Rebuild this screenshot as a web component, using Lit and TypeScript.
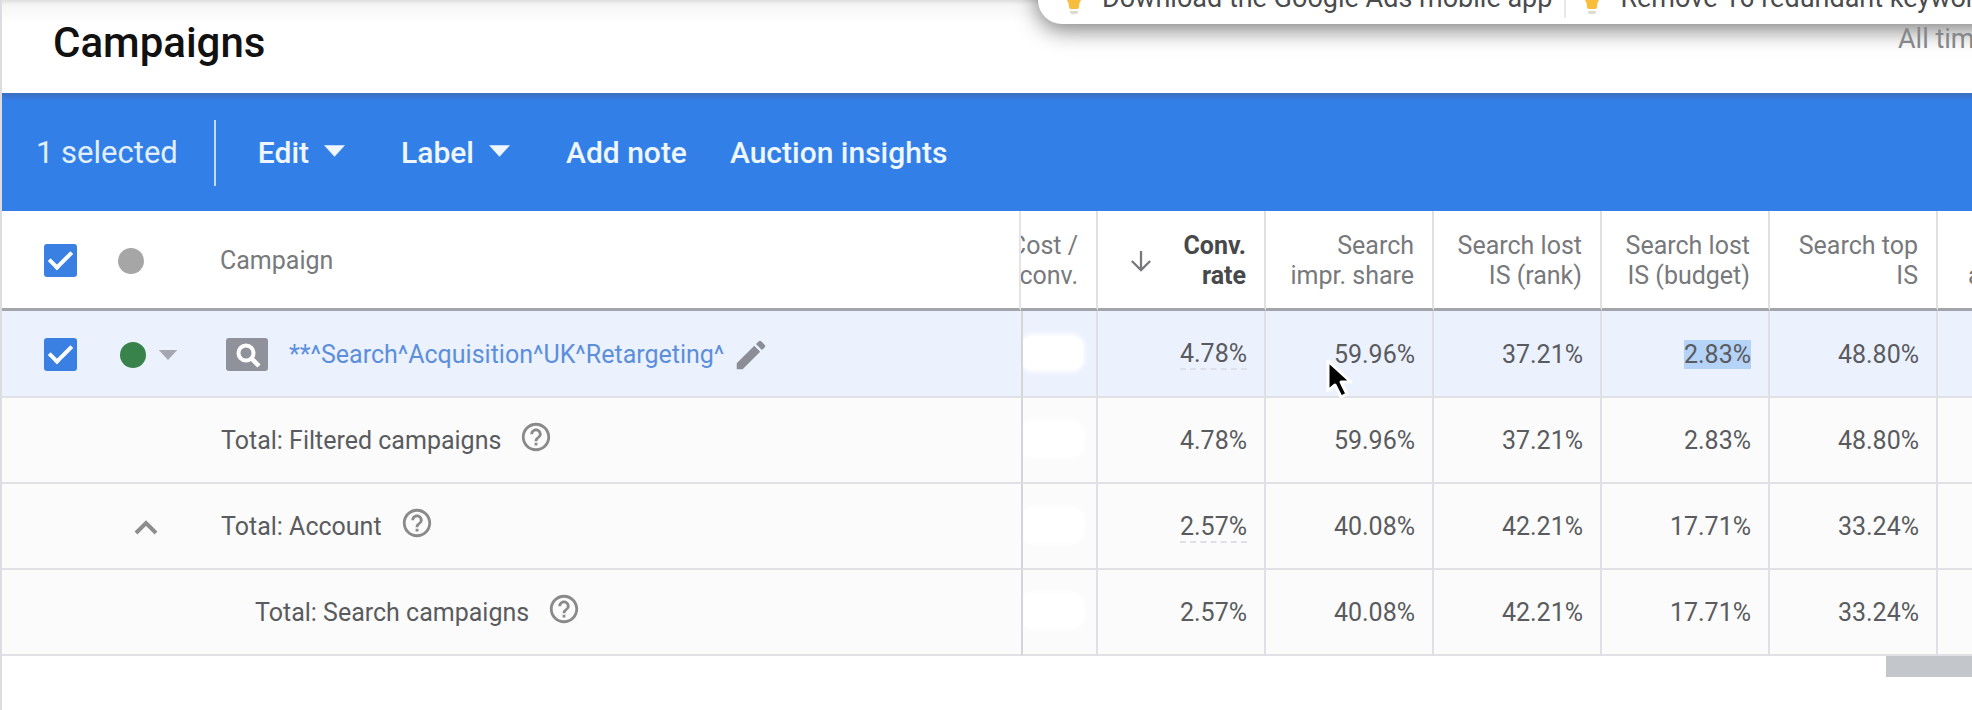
import { LitElement, html, css, svg, nothing } from "lit";
import { customElement, state } from "lit/decorators.js";
import { classMap } from "lit/directives/class-map.js";

interface Row {
  label: string;
  kind: "campaign" | "total" | "account" | "nested";
  values: string[];
  underlined: boolean;
}

const ROWS: Row[] = [
  { label: "**^Search^Acquisition^UK^Retargeting^", kind: "campaign", values: ["4.78%", "59.96%", "37.21%", "2.83%", "48.80%"], underlined: true },
  { label: "Total: Filtered campaigns", kind: "total", values: ["4.78%", "59.96%", "37.21%", "2.83%", "48.80%"], underlined: false },
  { label: "Total: Account", kind: "account", values: ["2.57%", "40.08%", "42.21%", "17.71%", "33.24%"], underlined: true },
  { label: "Total: Search campaigns", kind: "nested", values: ["2.57%", "40.08%", "42.21%", "17.71%", "33.24%"], underlined: false },
];

const COLUMNS: [string, string][] = [
  ["Search", "impr. share"],
  ["Search lost", "IS (rank)"],
  ["Search lost", "IS (budget)"],
  ["Search top", "IS"],
];

const caret = html`<svg class="caret" viewBox="0 0 22 12" aria-hidden="true">${svg`<path d="M0 0h22L11 12z" fill="currentColor"/>`}</svg>`;

const bulb = html`<svg class="bulb" viewBox="0 0 24 40" aria-hidden="true">
  <path d="M12 0a12 12 0 0 0-9 20c3 3 4 5 4 9a2 2 0 0 0 2 2h6a2 2 0 0 0 2-2c0-4 1-6 4-9A12 12 0 0 0 12 0z" fill="#f9bd3c"/>
  <path d="M8 33h8v1a2 2 0 0 1-2 2h-4a2 2 0 0 1-2-2z" fill="#dedad2"/>
</svg>`;

const help = html`<button class="icon-button help" aria-label="Help">
  <svg viewBox="0 0 24 24" width="34" height="34" aria-hidden="true">
    <path fill="currentColor" d="M11 18h2v-2h-2v2zm1-16C6.480 2 2 6.480 2 12s4.480 10 10 10 10-4.480 10-10S17.520 2 12 2zm0 18c-4.410 0-8-3.590-8-8s3.590-8 8-8 8 3.590 8 8-3.590 8-8 8zm0-14c-2.210 0-4 1.790-4 4h2c0-1.100.9-2 2-2s2 .9 2 2c0 2-3 1.750-3 5h2c0-2.250 3-2.500 3-5 0-2.210-1.790-4-4-4z"/>
  </svg>
</button>`;

@customElement("app-root")
export class AppRoot extends LitElement {
  static styles = css`
    :host {
      display: block;
      position: relative;
      min-height: 100vh;
      box-sizing: border-box;
      overflow: hidden;
      border-left: 2px solid #dcdde0;
      background: #fff;
      color: #5a5b5e;
      font: 400 25px/30px Roboto, "Open Sans", sans-serif;
    }
    button {
      border: 0;
      padding: 0;
      background: none;
      color: inherit;
      font: inherit;
      cursor: pointer;
    }
    svg { display: block; }

    .heading {
      display: flex;
      justify-content: space-between;
      height: 93px;
      box-sizing: border-box;
      padding: 18px 0 0 51px;
      background: linear-gradient(#dedede, #f6f6f6 5px, #fafafa 14px, #fff 24px);
    }
    .title {
      margin: 0;
      font-size: 42px;
      line-height: 50px;
      font-weight: 500;
      color: #111;
    }
    .range {
      width: 74px;
      padding-top: 6px;
      overflow: hidden;
      white-space: nowrap;
      font-size: 27px;
      color: #85878a;
      z-index: 2;
    }

    .tips {
      position: absolute;
      z-index: 1;
      top: -40px;
      left: 1036px;
      right: -40px;
      height: 64px;
      display: flex;
      align-items: center;
      box-sizing: border-box;
      padding: 12px 0 0 24px;
      border-radius: 24px;
      background: #fff;
      box-shadow: 0 6px 22px rgba(0, 0, 0, 0.5);
      white-space: nowrap;
      font-size: 27px;
      color: #4a4b4d;
    }
    .tip { display: flex; align-items: center; gap: 16px; }
    .tip + .tip { margin-left: 12px; padding-left: 14px; border-left: 2px solid #e8e8e8; }
    .bulb { width: 24px; height: 40px; flex: none; }

    .toolbar {
      display: flex;
      align-items: center;
      height: 118px;
      box-sizing: border-box;
      padding: 2px 34px 0;
      background: linear-gradient(#3b6fc0, #327fe8 8px);
      color: #fff;
      font-size: 30px;
      white-space: nowrap;
    }
    .selected {
      padding-right: 36px;
      font-size: 31px;
      line-height: 66px;
      border-right: 2px solid #c3dbfa;
      color: #e2efff;
    }
    .actions { display: flex; gap: 43px; margin-left: 42px; }
    .action { display: flex; align-items: center; gap: 15px; font-weight: 500; color: #eef6ff; }
    .action.menu { margin-right: 13px; }
    .caret { width: 21px; height: 12px; margin-bottom: 4px; }

    .table { width: calc(100% + 134px); table-layout: fixed; border-collapse: separate; border-spacing: 0; }
    .col-check { width: 84px; }
    .col-status { width: 134px; }
    .col-cost { width: 77px; }
    .col-metric { width: 168px; }

    th, td {
      box-sizing: border-box;
      padding: 2px 0 0;
      text-align: left;
      font-weight: 400;
      white-space: nowrap;
    }
    th { height: 100px; border-bottom: 3px solid #a2a6ac; color: #77797c; }
    tbody td, tbody th { height: 86px; border-bottom: 2px solid #dfe1e4; background: #fbfbfb; color: #5a5b5e; }
    .is-selected td, .is-selected th { height: 87px; background: #ecf1fe; }
    .metric { padding-right: 17px; border-right: 2px solid #dfe0e3; text-align: right; }
    thead .metric { padding-right: 18px; }
    tbody .cost { border-left: 2px solid #d3d5d9; }
    thead .name { border-right: 2px solid #e4e4e6; }
    .cost { overflow: hidden; }
    .clip { display: flex; flex-direction: column; align-items: flex-end; }
    thead .last { padding-left: 30px; padding-right: 0; border-right: 0; text-align: left; }

    .check { padding-left: 42px; }
    .box {
      appearance: none;
      width: 33px;
      height: 33px;
      margin: 0;
      border-radius: 3px;
      background: #3a7fe2;
      display: grid;
      place-items: center;
    }
    .box::before {
      content: "";
      width: 19px;
      height: 9px;
      margin-top: -7px;
      border: solid #fff;
      border-width: 0 0 4px 4px;
      rotate: -45deg;
    }
    .box:not(:checked) { background: #fff; border: 3px solid #777; }

    .status { display: flex; align-items: center; gap: 12px; padding-left: 34px; }
    thead .status { padding-left: 32px; }
    .dot { width: 26px; height: 26px; border-radius: 50%; background: #a6a6a6; }
    .dot.on { background: #37834b; }
    .status .caret { width: 20px; height: 10px; margin: 0; color: #a4a7af; }
    .chevron { padding-left: 47px; color: #8d8d8d; }

    .label { display: flex; align-items: center; gap: 18px; padding-left: 1px; }
    .nested .label { padding-left: 35px; }
    .campaign .label { padding-left: 6px; gap: 0; }
    .badge { width: 42px; height: 33px; margin-right: 21px; }
    .link { color: #5b8fdc; text-decoration: none; }
    .icon-button.help { width: 34px; height: 34px; margin-top: -8px; color: #8a8a8a; }
    .pencil { margin-left: 8px; color: #8b8e96; }

    .sorted { font-weight: 700; color: #47484a; }
    .sort { display: flex; width: 100%; align-items: center; justify-content: space-between; padding-left: 32px; box-sizing: border-box; text-align: right; }
    .dashed { display: inline-block; line-height: 28px; border-bottom: 2px dashed #dde0e8; }
    .marked { background: #b5d2f7; }
    .redacted {
      width: 62px;
      height: 34px;
      margin: -4px 0 0 -2px;
      border-radius: 12px;
      background: #fff;
      box-shadow: 0 0 5px 2px #fff;
    }

    .scrollbar { display: flex; justify-content: flex-end; height: 21px; }
    .thumb { width: 86px; background: #c3c6ca; }

    .pointer { position: absolute; left: 1322px; top: 357px; width: 30px; height: 44px; z-index: 3; }
  `;

  @state() private open = true;

  private renderStatus(row: Row) {
    if (row.kind === "campaign") {
      return html`<button class="status" aria-label="Enabled"><span class="dot on"></span>${caret}</button>`;
    }
    if (row.kind === "account") {
      return html`<button class="chevron" aria-label="Toggle account totals" @click=${() => (this.open = !this.open)}>
        <svg viewBox="0 0 24 16" width="26" height="16" aria-hidden="true"><path d="M2 14L12 4l10 10" fill="none" stroke="currentColor" stroke-width="4"/></svg>
      </button>`;
    }
    return nothing;
  }

  private renderName(row: Row) {
    if (row.kind !== "campaign") {
      return html`<div class="label"><span>${row.label}</span>${help}</div>`;
    }
    return html`<div class="label">
      <svg class="badge" viewBox="0 0 42 33" aria-hidden="true">
        <rect width="42" height="33" rx="3" fill="#8f929a"/>
        <circle cx="20" cy="15" r="7.500" fill="none" stroke="#fff" stroke-width="4"/>
        <path d="M25 20l8 8" stroke="#fff" stroke-width="4.500"/>
      </svg>
      <a class="link" href="#">${row.label}</a>
      <button class="icon-button pencil" aria-label="Edit name">
        <svg viewBox="0 0 24 24" width="38" height="38" aria-hidden="true"><path fill="currentColor" d="M3 17.250V21h3.750L17.810 9.940l-3.750-3.750L3 17.250zM20.710 7.040a1 1 0 0 0 0-1.410l-2.340-2.340a1 1 0 0 0-1.410 0l-1.830 1.830 3.750 3.750 1.830-1.830z"/></svg>
      </button>
    </div>`;
  }

  private renderRow(row: Row) {
    const selected = row.kind === "campaign";
    return html`<tr class=${classMap({ "is-selected": selected, [row.kind]: true })}>
      <td class="check">${selected ? html`<input class="box" type="checkbox" checked aria-label="Select campaign">` : nothing}</td>
      <td>${this.renderStatus(row)}</td>
      <th class="name" scope="row">${this.renderName(row)}</th>
      <td class="metric cost"><div class="redacted"></div></td>
      ${row.values.map((value, i) => html`<td class="metric"><span class=${classMap({ dashed: row.underlined && i === 0, marked: selected && i === 3 })}>${value}</span></td>`)}
      <td></td>
    </tr>`;
  }

  render() {
    return html`
      <header class="heading">
        <h1 class="title">Campaigns</h1>
        <span class="range">All time</span>
      </header>
      <aside class="tips">
        <div class="tip">${bulb}<span>Download the Google Ads mobile app</span></div>
        <div class="tip">${bulb}<span>Remove 16 redundant keywords</span></div>
      </aside>
      <div class="toolbar" role="toolbar">
        <span class="selected">1 selected</span>
        <div class="actions">
          <button class="action menu">Edit${caret}</button>
          <button class="action menu">Label${caret}</button>
          <button class="action">Add note</button>
          <button class="action">Auction insights</button>
        </div>
      </div>
      <table class="table">
        <colgroup>
          <col class="col-check"><col class="col-status"><col>
          <col class="col-cost"><col class="col-metric"><col class="col-metric">
          <col class="col-metric"><col class="col-metric"><col class="col-metric"><col class="col-metric">
        </colgroup>
        <thead>
          <tr>
            <th class="check"><input class="box" type="checkbox" checked aria-label="Select all"></th>
            <th><div class="status"><span class="dot"></span></div></th>
            <th class="name" scope="col">Campaign</th>
            <th class="metric cost" scope="col"><div class="clip"><span>Cost /</span><span>conv.</span></div></th>
            <th class="metric sorted" scope="col">
              <button class="sort">
                <svg viewBox="0 0 24 24" width="22" height="24" aria-hidden="true"><path d="M12 1v20M2 12l10 10 10-10" fill="none" stroke="#77797c" stroke-width="2.500"/></svg>
                <span>Conv.<br>rate</span>
              </button>
            </th>
            ${COLUMNS.map(([a, b]) => html`<th class="metric" scope="col">${a}<br>${b}</th>`)}
            <th class="metric last" scope="col"><br>abs. top IS</th>
          </tr>
        </thead>
        <tbody>
          ${ROWS.filter((row) => this.open || row.kind !== "nested").map((row) => this.renderRow(row))}
        </tbody>
      </table>
      <div class="scrollbar"><div class="thumb"></div></div>
      <svg class="pointer" viewBox="0 0 30 44" aria-hidden="true">
        <path d="M4 4v30l7-6 6 12 6-3-6-12h10z" fill="#000" stroke="#fff" stroke-width="3" stroke-linejoin="round"/>
      </svg>
    `;
  }
}
